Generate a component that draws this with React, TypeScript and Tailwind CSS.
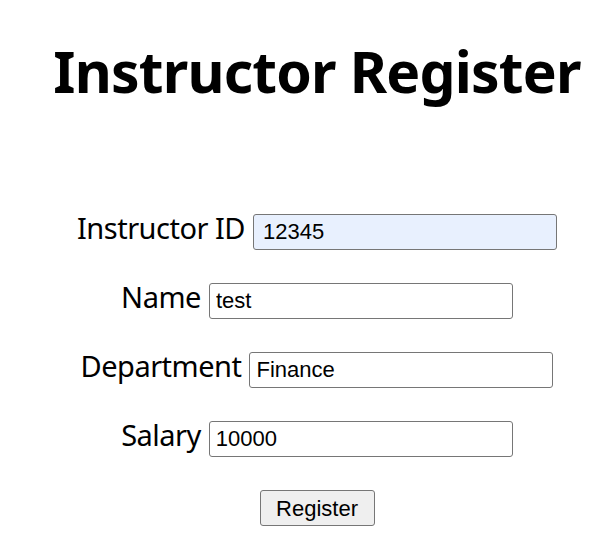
const fields = [
  { label: "Instructor ID", value: "12345", autofill: true },
  { label: "Name", value: "test" },
  { label: "Department", value: "Finance" },
  { label: "Salary", value: "10000" },
];

export default function App() {
  return (
    <div className="min-h-screen bg-white pl-[21px] text-black [font-family:'Noto_Sans',sans-serif]">
      <h1 className="pt-[35px] text-center text-[57px] font-bold leading-[72px] tracking-[-0.8px]">
        Instructor Register
      </h1>
      <form className="mt-[103px] flex flex-col items-center gap-[29px]">
        {fields.map((f) => (
          <div key={f.label} className="flex items-baseline justify-center gap-[8px]">
            <label className="text-[29px] leading-[36px] tracking-[-0.5px]">{f.label}</label>
            <input
              readOnly
              value={f.value}
              className={`h-[36px] w-[304px] rounded-[3px] border border-[#767676] px-[6px] text-[22px] [font-family:'Liberation_Sans',Arial,sans-serif] outline-none ${
                f.autofill ? "bg-[#e8f0fe] pl-[9px]" : "bg-white"
              }`}
            />
          </div>
        ))}
        <button
          type="button"
          className="mt-[4px] h-[36px] w-[115px] rounded-[3px] border border-[#767676] bg-[#efefef] text-[22px] [font-family:'Liberation_Sans',Arial,sans-serif]"
        >
          Register
        </button>
      </form>
    </div>
  );
}
